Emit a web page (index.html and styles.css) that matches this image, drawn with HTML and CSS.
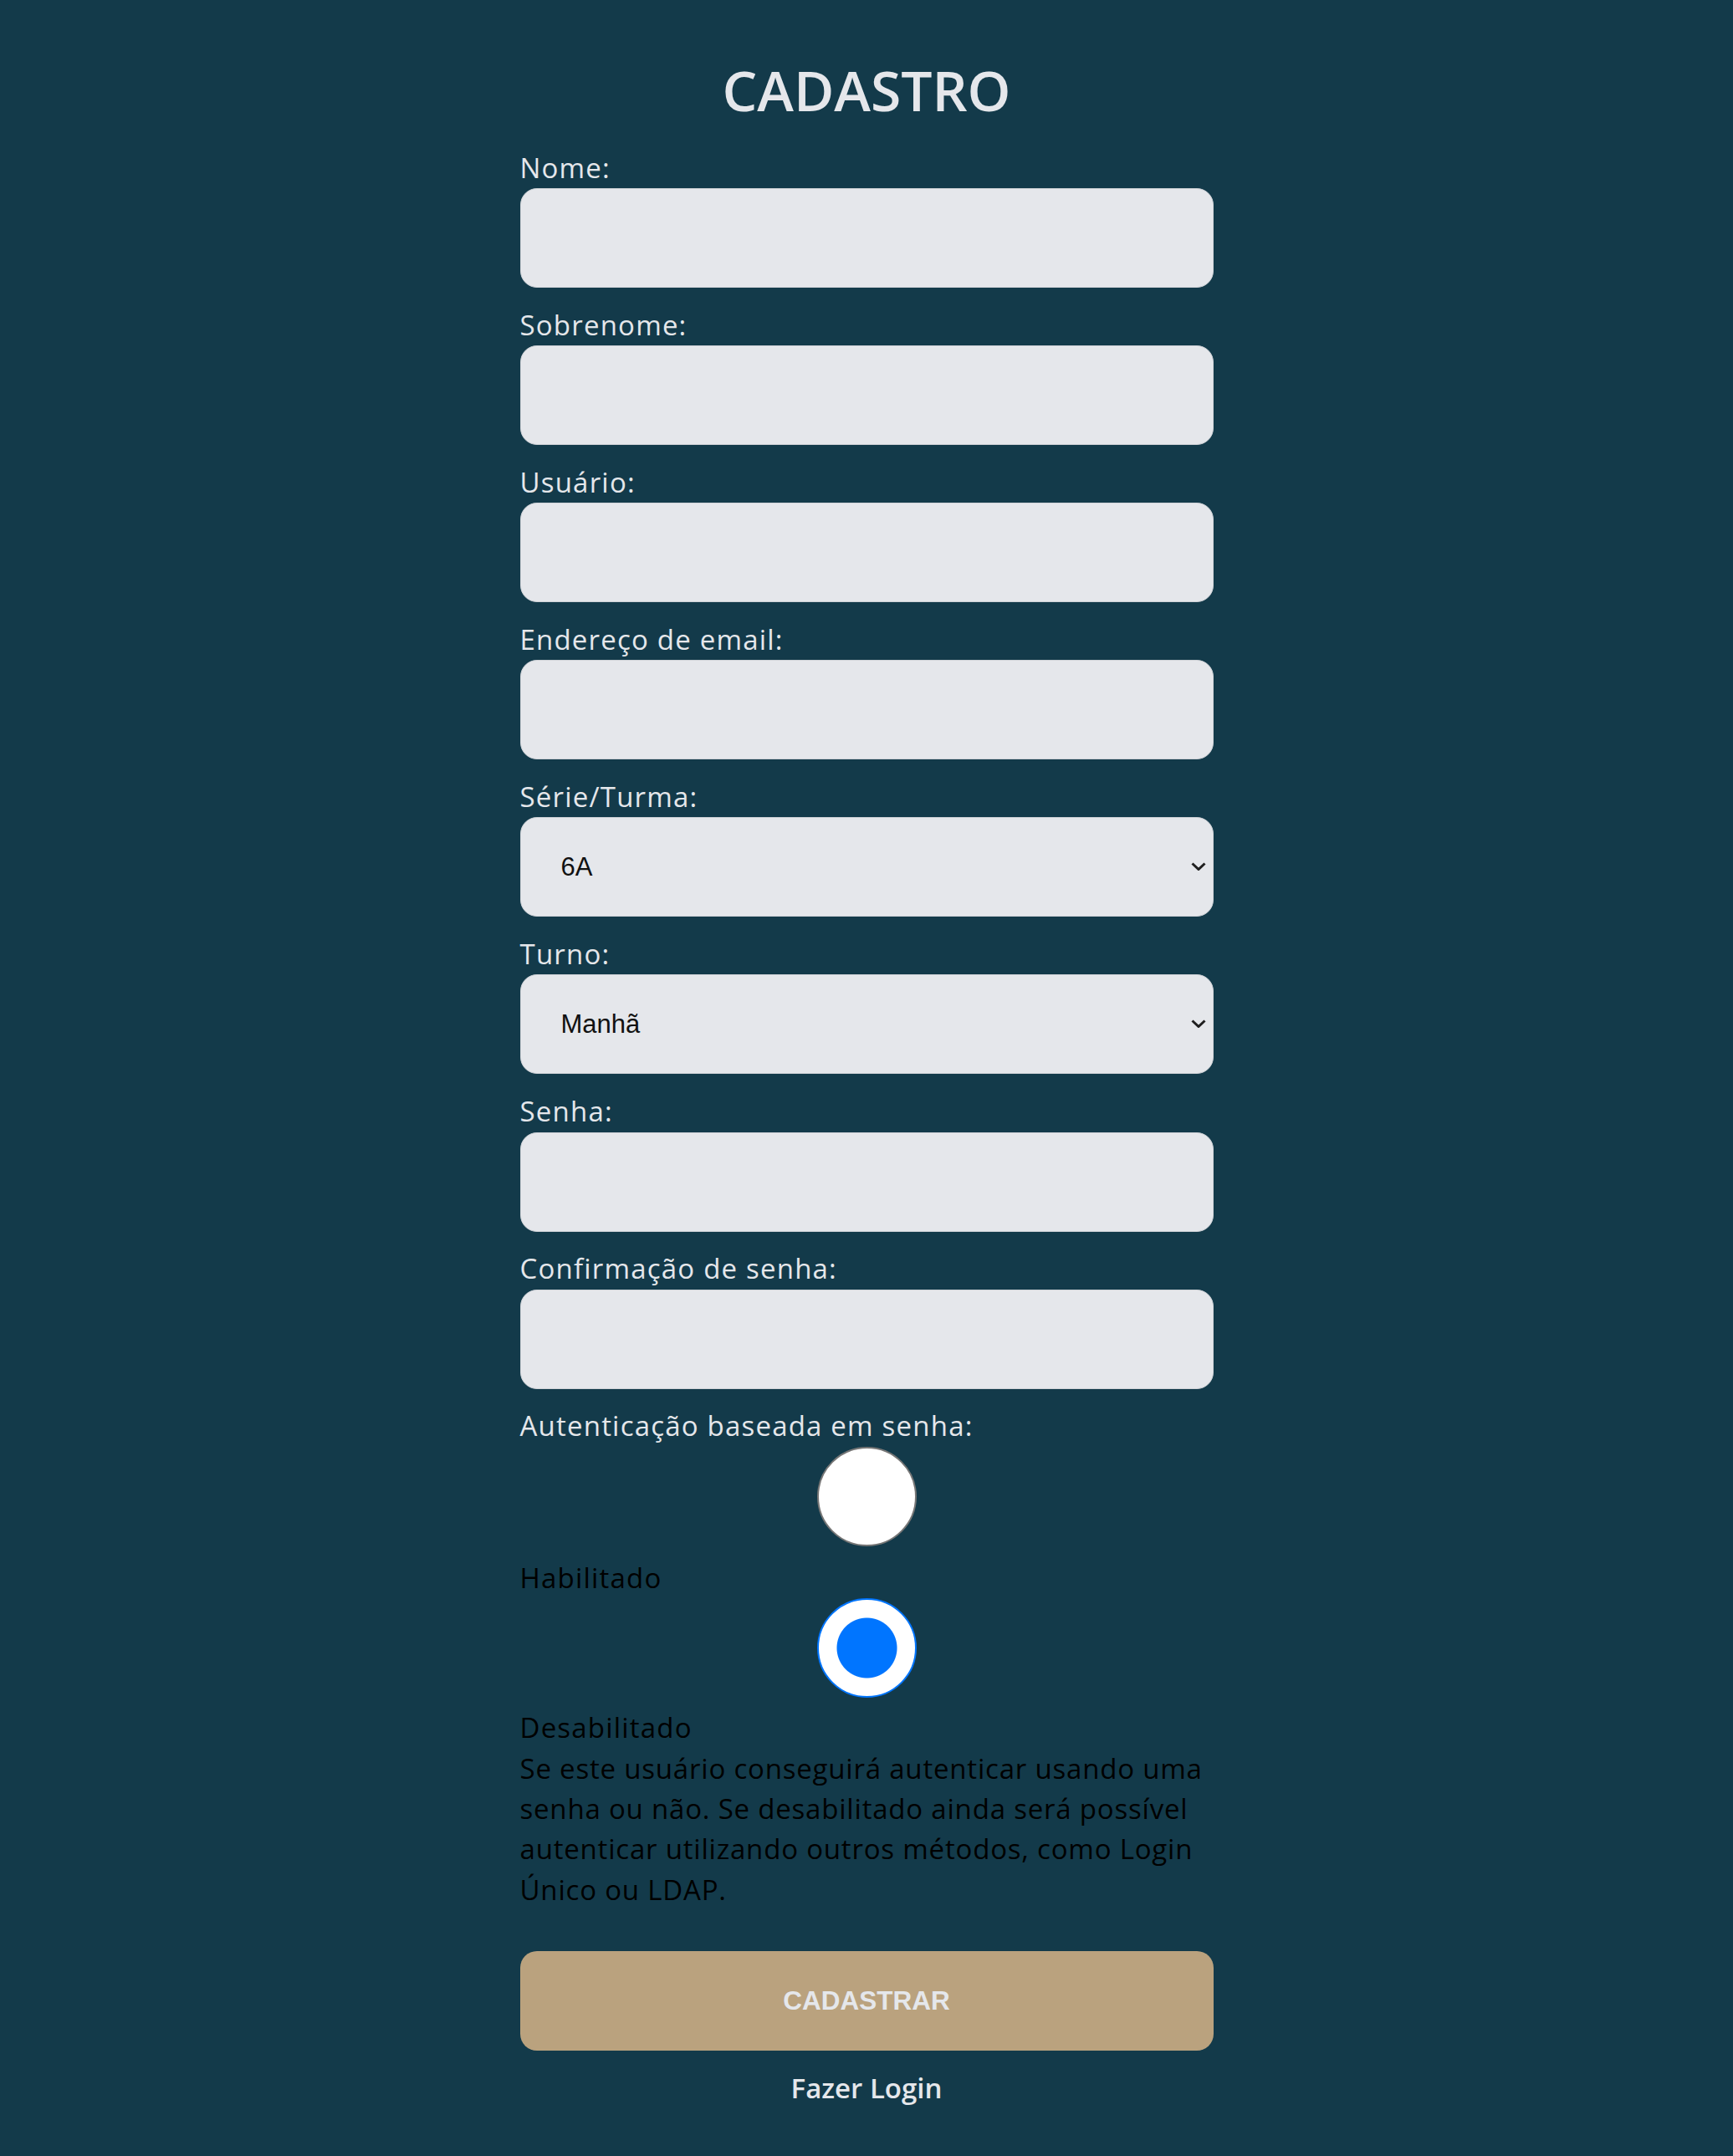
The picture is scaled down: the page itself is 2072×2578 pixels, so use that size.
FILE: index.html
```html
<!DOCTYPE html>
<html lang="pt-BR">
  <head>
    <meta charset="UTF-8" />
    <meta name="viewport" content="width=device-width, initial-scale=1.0" />
    <title>Cadastro</title>
    <link rel="stylesheet" href="styles.css">
  </head>
  <body>
    <main class="cadastro">
      <h1 class="title">CADASTRO</h1>

      <form class="form">
        <label for="nome">Nome:</label>
        <input type="text" id="nome" class="field" />

        <label for="sobrenome">Sobrenome:</label>
        <input type="text" id="sobrenome" class="field" />

        <label for="usuario">Usuário:</label>
        <input type="text" id="usuario" class="field" />

        <label for="email">Endereço de email:</label>
        <input type="email" id="email" class="field" />

        <label for="turma">Série/Turma:</label>
        <div class="select-wrap">
          <select id="turma" class="field select">
            <option>6A</option>
            <option>6B</option>
            <option>7A</option>
          </select>
          <svg class="chevron" viewBox="0 0 18 10" aria-hidden="true">
            <path d="M1.5 1.5 L9 8.5 L16.5 1.5" />
          </svg>
        </div>

        <label for="turno">Turno:</label>
        <div class="select-wrap">
          <select id="turno" class="field select">
            <option>Manhã</option>
            <option>Tarde</option>
          </select>
          <svg class="chevron" viewBox="0 0 18 10" aria-hidden="true">
            <path d="M1.5 1.5 L9 8.5 L16.5 1.5" />
          </svg>
        </div>

        <label for="senha">Senha:</label>
        <input type="password" id="senha" class="field" />

        <label for="confirmacao">Confirmação de senha:</label>
        <input type="password" id="confirmacao" class="field" />

        <label>Autenticação baseada em senha:</label>
        <input type="radio" name="auth" id="habilitado" class="radio" />
        <label for="habilitado" class="radio-label">Habilitado</label>
        <input type="radio" name="auth" id="desabilitado" class="radio radio-last" checked />
        <label for="desabilitado" class="radio-label">Desabilitado</label>
        <p class="help">
          Se este usuário conseguirá autenticar usando uma senha ou não. Se
          desabilitado ainda será possível autenticar utilizando outros
          métodos, como Login Único ou LDAP.
        </p>

        <button type="submit" class="button">Cadastrar</button>
        <a href="#" class="login-link">Fazer Login</a>
      </form>
    </main>
  </body>
</html>
```

FILE: styles.css
```css
body {
  margin: 0;
  background: #133a4a;
  color: #e5e7eb;
  font-family: "Open Sans", "DejaVu Sans", sans-serif;
}

.cadastro {
  width: 829px;
  margin: 0 auto;
  padding: 67.5px 0 50px;
}

.title {
  margin: 0 0 29px;
  font-size: 66px;
  line-height: 79px;
  font-weight: 600;
  text-align: center;
}

.form {
  display: flex;
  flex-direction: column;
}

.form label {
  font-size: 33px;
  line-height: 49.5px;
  letter-spacing: 1.2px;
}

.field {
  box-sizing: border-box;
  width: 100%;
  height: 119px;
  margin: 0 0 19.6px;
  padding: 0 48px;
  border: 1px solid #cfd2d7;
  border-radius: 20px;
  background: #e5e7eb;
  font-family: "Liberation Sans", Arial, sans-serif;
  font-size: 31px;
  color: #111;
}

.select-wrap {
  position: relative;
}

.select {
  appearance: none;
  -webkit-appearance: none;
  display: block;
}

.chevron {
  position: absolute;
  top: 54px;
  right: 9px;
  width: 18px;
  height: 10px;
  fill: none;
  stroke: #1f1f1f;
  stroke-width: 3;
  pointer-events: none;
}

.radio {
  appearance: none;
  -webkit-appearance: none;
  display: block;
  box-sizing: border-box;
  width: 119px;
  height: 119px;
  margin: 0 auto 13px;
  border: 2px solid #767676;
  border-radius: 50%;
  background: #fff;
}

.radio-last {
  margin-bottom: 11px;
}

.radio:checked {
  border-color: #0075ff;
  background: radial-gradient(circle, #0075ff 0 35.5px, #fff 36.5px);
}

.form .radio-label {
  color: #000;
}

.help {
  margin: 0 0 49px;
  font-size: 33px;
  line-height: 48.3px;
  letter-spacing: 0.8px;
  color: #000;
}

.button {
  height: 119px;
  margin: 0 0 19.6px;
  border: none;
  border-radius: 20px;
  background: #baa27e;
  color: #e5e7eb;
  font-family: "Liberation Sans", Arial, sans-serif;
  font-size: 31.5px;
  font-weight: 700;
  text-transform: uppercase;
  cursor: pointer;
}

.login-link {
  align-self: center;
  font-size: 33px;
  line-height: 49.5px;
  font-weight: 600;
  color: #e5e7eb;
  text-decoration: none;
}
```
